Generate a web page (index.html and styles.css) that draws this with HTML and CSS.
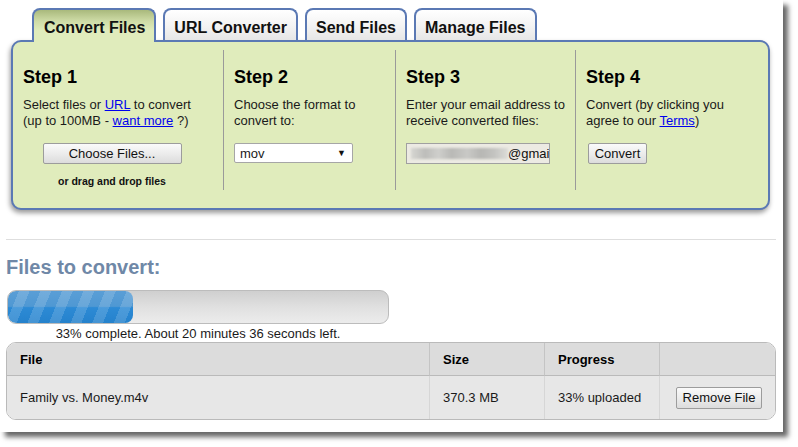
FILE: index.html
```html
<!DOCTYPE html>
<html>
<head>
<meta charset="utf-8">
<link rel="stylesheet" href="styles.css">
</head>
<body>
<div class="frame">
  <div class="tabs">
    <div class="tab active">Convert Files</div>
    <div class="tab">URL Converter</div>
    <div class="tab">Send Files</div>
    <div class="tab">Manage Files</div>
  </div>
  <div class="panel">
    <div class="step step1">
      <h3>Step 1</h3>
      <p>Select files or <a href="#">URL</a> to convert<br>(up to 100MB - <a href="#">want more</a> ?)</p>
      <div class="center">
        <button class="btn choose">Choose Files...</button>
        <div class="dnd">or drag and drop files</div>
      </div>
    </div>
    <div class="step step2">
      <h3>Step 2</h3>
      <p>Choose the format to<br>convert to:</p>
      <div class="select"><span>mov</span><span class="arrow">&#9660;</span></div>
    </div>
    <div class="step step3">
      <h3>Step 3</h3>
      <p>Enter your email address to<br>receive converted files:</p>
      <div class="email"><span class="blur"></span><span class="domain">@gmai</span></div>
    </div>
    <div class="step step4">
      <h3>Step 4</h3>
      <p>Convert (by clicking you<br>agree to our <a href="#">Terms</a>)</p>
      <button class="btn convert">Convert</button>
    </div>
  </div>
  <div class="rule"></div>
  <h2 class="files-title">Files to convert:</h2>
  <div class="progress-block">
    <div class="progress"><div class="fill" style="width:125px"></div></div>
    <div class="status">33% complete. About 20 minutes 36 seconds left.</div>
  </div>
  <div class="table">
    <div class="cell head">File</div>
    <div class="cell head">Size</div>
    <div class="cell head">Progress</div>
    <div class="cell head last"></div>
    <div class="cell body">Family vs. Money.m4v</div>
    <div class="cell body">370.3 MB</div>
    <div class="cell body">33% uploaded</div>
    <div class="cell body last action"><button class="btn remove">Remove File</button></div>
  </div>
</div>
</body>
</html>
```
FILE: styles.css
```css
html, body {
  margin: 0;
  padding: 0;
  background: #fff;
}
body {
  height: 447px;
  font-family: "Liberation Sans", Arial, sans-serif;
  font-size: 13px;
  color: #1a1a1a;
}
.frame {
  box-sizing: border-box;
  width: 783px;
  height: 432px;
  padding: 8px 7px 0 6px;
  background: #fff;
  box-shadow: 5px 5px 5px rgba(0, 0, 0, 0.6);
}
.tabs {
  display: flex;
  align-items: flex-start;
  gap: 7px;
  margin-left: 26px;
  height: 34px;
  margin-bottom: -2px;
  position: relative;
  z-index: 2;
}
.tab {
  box-sizing: border-box;
  height: 32px;
  padding: 8px 9px 2px;
  line-height: 20px;
  font-size: 16px;
  font-weight: bold;
  color: #111;
  border: 2px solid #5b79b4;
  border-bottom: none;
  border-radius: 8px 8px 0 0;
  background: linear-gradient(#ffffff, #f4f4f4 50%, #e6e6e6);
}
.tab.active {
  height: 34px;
  padding-left: 10px;
  padding-right: 9px;
  background: linear-gradient(#a9b97c, #cfdca7 35%, #e0ecbc 65%);
}
.panel {
  display: flex;
  box-sizing: border-box;
  height: 170px;
  margin: 0 6px 0 5px;
  padding: 8px 0 18px;
  background: #e0ecbc;
  border: 2px solid #5b79b4;
  border-radius: 10px;
  box-shadow: -1px 3px 5px rgba(0, 0, 0, 0.4);
}
.step {
  box-sizing: border-box;
  height: 140px;
  padding: 0 10px;
  border-right: 1px solid #9a9a9a;
}
.step1 { width: 211px; padding-right: 22px; }
.step2 { width: 172px; }
.step3 { width: 180px; }
.step4 { flex: 1; border-right: none; }
.step h3 {
  margin: 16px 0 9px;
  font-size: 18px;
  line-height: 22px;
  font-weight: bold;
  color: #000;
}
.step p {
  margin: 0;
  line-height: 16px;
  height: 32px;
  white-space: nowrap;
}
a {
  color: #0000ee;
  text-decoration: underline;
}
.btn {
  font-family: "Liberation Sans", Arial, sans-serif;
  font-size: 13px;
  color: #111;
  height: 21px;
  padding: 0 6px;
  border: 1px solid #9c9c9c;
  border-radius: 2px;
  background: linear-gradient(#fafafa, #ececec 50%, #dcdcdc);
  line-height: 19px;
}
.center {
  display: flex;
  flex-direction: column;
  align-items: center;
}
.choose {
  margin-top: 14px;
  width: 139px;
}
.dnd {
  margin-top: 11px;
  font-size: 10.5px;
  font-weight: bold;
  line-height: 12px;
  color: #111;
}
.select {
  box-sizing: border-box;
  margin-top: 14px;
  width: 119px;
  height: 20px;
  display: flex;
  align-items: center;
  justify-content: space-between;
  padding: 0 6px 0 5px;
  background: #fff;
  border: 1px solid #a6a6a6;
  border-radius: 2px;
}
.arrow {
  font-size: 9px;
  color: #111;
}
.email {
  box-sizing: border-box;
  margin-top: 14px;
  width: 144px;
  height: 21px;
  display: flex;
  align-items: center;
  padding: 0 1px 0 4px;
  background: #eceae3;
  border: 1px solid #a0a0a0;
  overflow: hidden;
  white-space: nowrap;
}
.blur {
  flex: none;
  width: 97px;
  height: 11px;
  background: linear-gradient(90deg, #d6d6d2, #bdbdba 15%, #cfcfcc 28%, #b9b9b6 42%, #c9c9c6 58%, #b7b7b4 72%, #c4c4c1 86%, #dcdcd8);
  filter: blur(1.2px);
}
.domain {
  color: #111;
}
.convert {
  margin-top: 14px;
  margin-left: 2px;
  width: 59px;
  padding: 0;
}
.rule {
  height: 1px;
  background: #dedede;
  margin-top: 29px;
}
.files-title {
  margin: 15px 0 11px;
  font-size: 20px;
  line-height: 24px;
  font-weight: bold;
  color: #6f88a7;
}
.progress-block {
  width: 382px;
  margin-left: 1px;
}
.progress {
  box-sizing: border-box;
  height: 34px;
  border: 1px solid #bcbcbc;
  border-radius: 9px;
  background: linear-gradient(#cfcfcf, #e0e0e0 50%, #ececec);
  overflow: hidden;
}
.fill {
  height: 100%;
  border-radius: 8px;
  background:
    repeating-linear-gradient(112deg, rgba(255, 255, 255, 0) 0 10px, rgba(255, 255, 255, 0.15) 10px 20px),
    linear-gradient(#5a9ed6, #4f98d3 48%, #2c8ad5 52%, #2582cc);
}
.status {
  margin-top: 2px;
  text-align: center;
  line-height: 16px;
  color: #1a1a1a;
}
.table {
  display: grid;
  grid-template-columns: 423px 115px 115px 1fr;
  grid-template-rows: 33px 43px;
  border: 1px solid #bababa;
  border-radius: 10px;
  overflow: hidden;
}
.cell {
  display: flex;
  align-items: center;
  padding-left: 13px;
  border-right: 1px solid #c4c4c4;
}
.cell.last { border-right: none; }
.head {
  background: #dcdcdc;
  font-weight: bold;
  color: #000;
  border-bottom: 1px solid #bababa;
}
.body {
  background: #e7e7e7;
  border-right-color: #d6d6d6;
}
.action {
  padding-left: 16px;
}
.remove {
  width: 86px;
  height: 22px;
  padding: 0;
}
```
